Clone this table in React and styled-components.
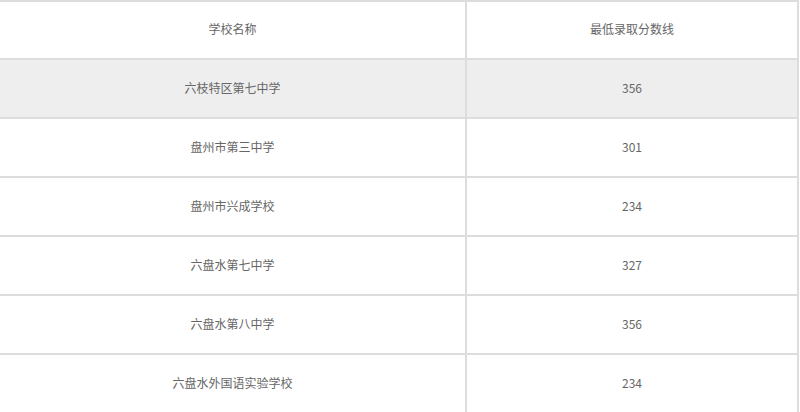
import React from "react";
import styled, { createGlobalStyle } from "styled-components";

const GlobalStyle = createGlobalStyle`
  html, body {
    margin: 0;
    padding: 0;
    background: #fff;
    overflow: hidden;
  }
  body {
    font-family: "Noto Sans CJK SC", "Noto Sans", sans-serif;
  }
`;

const rows = [
  { name: "六枝特区第七中学", score: 356, active: true },
  { name: "盘州市第三中学", score: 301 },
  { name: "盘州市兴成学校", score: 234 },
  { name: "六盘水第七中学", score: 327 },
  { name: "六盘水第八中学", score: 356 },
  { name: "六盘水外国语实验学校", score: 234 },
];

const Table = styled.table`
  width: 799px;
  table-layout: fixed;
  border-collapse: separate;
  border-spacing: 0;
  border-top: 2px solid #dddddd;
  font-size: 12px;
  color: #666;
`;

const Cell = styled.td`
  height: ${(p) => (p.$head ? 54 : 55)}px;
  padding: 0 0 2px;
  text-align: center;
  vertical-align: middle;
  border-right: 2px solid #dddddd;
  border-bottom: 2px solid #dddddd;
  background: ${(p) => (p.$active ? "#eeeeee" : "#ffffff")};
  font-weight: normal;
  line-height: 1;
`;

const Row = styled.tr``;

export default function App() {
  return (
    <>
      <GlobalStyle />
      <Table>
        <colgroup>
          <col style={{ width: 467 }} />
          <col style={{ width: 332 }} />
        </colgroup>
        <thead>
          <Row>
            <Cell as="th" $head>学校名称</Cell>
            <Cell as="th" $head>最低录取分数线</Cell>
          </Row>
        </thead>
        <tbody>
          {rows.map((r) => (
            <Row key={r.name}>
              <Cell $active={r.active}>{r.name}</Cell>
              <Cell $active={r.active}>{r.score}</Cell>
            </Row>
          ))}
        </tbody>
      </Table>
    </>
  );
}
